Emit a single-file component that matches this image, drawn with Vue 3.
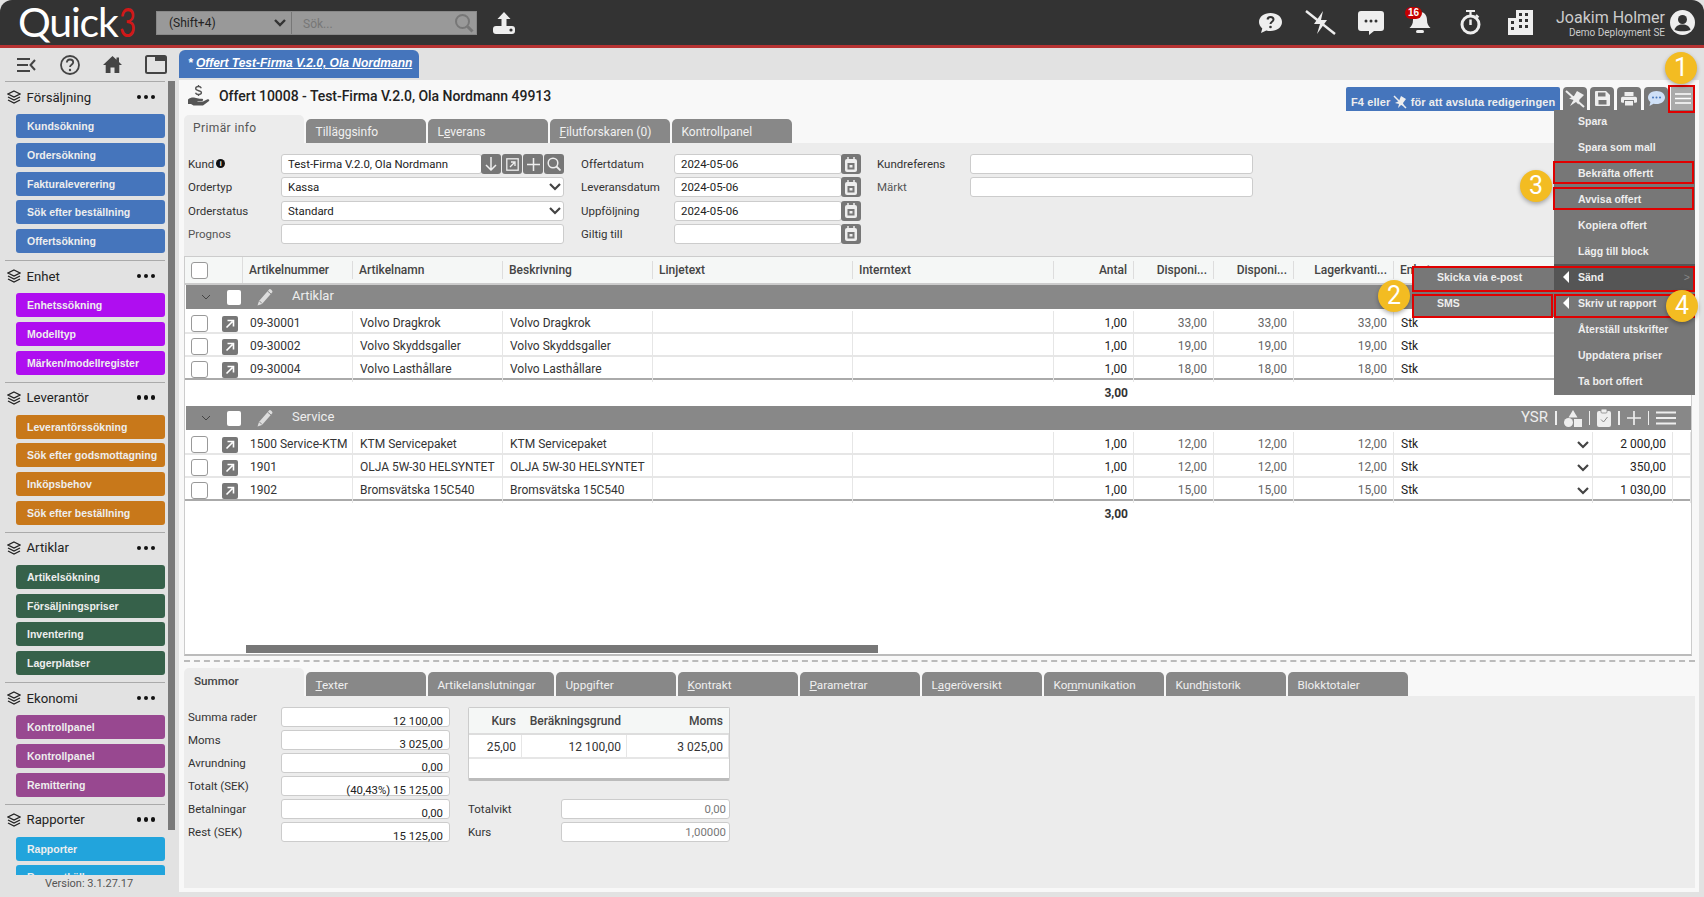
<script setup>
const sections = [
  { title: 'Försäljning', color: 'blue', items: ['Kundsökning', 'Ordersökning', 'Fakturaleverering', 'Sök efter beställning', 'Offertsökning'] },
  { title: 'Enhet', color: 'violet', items: ['Enhetssökning', 'Modelltyp', 'Märken/modellregister'] },
  { title: 'Leverantör', color: 'orange', items: ['Leverantörssökning', 'Sök efter godsmottagning', 'Inköpsbehov', 'Sök efter beställning'] },
  { title: 'Artiklar', color: 'green', items: ['Artikelsökning', 'Försäljningspriser', 'Inventering', 'Lagerplatser'] },
  { title: 'Ekonomi', color: 'plum', items: ['Kontrollpanel', 'Kontrollpanel', 'Remittering'] },
  { title: 'Rapporter', color: 'sky', items: ['Rapporter', 'Rapportkällor'] },
]
const topTabs = [['', '', 'Tilläggsinfo'], ['L', 'e', 'verans'], ['', 'F', 'ilutforskaren (0)'], ['', '', 'Kontrollpanel']]
const bottomTabs = [
  ['', 'T', 'exter', 120], ['', '', 'Artikelanslutningar', 126], ['', '', 'Uppgifter', 120], ['', 'K', 'ontrakt', 120],
  ['', 'P', 'arametrar', 121], ['L', 'a', 'geröversikt', 120], ['Ko', 'm', 'munikation', 120], ['Kund', 'h', 'istorik', 120], ['', '', 'Blokktotaler', 120],
]
const formMiddle = [['Offertdatum', '2024-05-06'], ['Leveransdatum', '2024-05-06'], ['Uppföljning', '2024-05-06'], ['Giltig till', '']]
const columns = [
  ['Artikelnummer', 'l'], ['Artikelnamn', 'l'], ['Beskrivning', 'l'], ['Linjetext', 'l'], ['Interntext', 'l'],
  ['Antal', 'r'], ['Disponi...', 'r'], ['Disponi...', 'r'], ['Lagerkvanti...', 'r'], ['Enhet', 'l'],
]
const groups = [
  { name: 'Artiklar', tools: false, rows: [
    ['09-30001', 'Volvo Dragkrok', '1,00', '33,00', ''],
    ['09-30002', 'Volvo Skyddsgaller', '1,00', '19,00', ''],
    ['09-30004', 'Volvo Lasthållare', '1,00', '18,00', ''],
  ] },
  { name: 'Service', tools: true, rows: [
    ['1500 Service-KTM', 'KTM Servicepaket', '1,00', '12,00', '2 000,00'],
    ['1901', 'OLJA 5W-30 HELSYNTET', '1,00', '12,00', '350,00'],
    ['1902', 'Bromsvätska 15C540', '1,00', '15,00', '1 030,00'],
  ] },
]
const totals = [['Summa rader', '12 100,00'], ['Moms', '3 025,00'], ['Avrundning', '0,00'], ['Totalt (SEK)', '(40,43%) 15 125,00'], ['Betalningar', '0,00'], ['Rest (SEK)', '15 125,00']]
const menu = ['Spara', 'Spara som mall', 'Bekräfta offertt', 'Avvisa offert', 'Kopiera offert', 'Lägg till block', 'Sänd', 'Skriv ut rapport', 'Återställ utskrifter', 'Uppdatera priser', 'Ta bort offert']
const marks = ['m-burger', 'm-confirm', 'm-reject', 'm-send', 'm-sms', 'm-print']
const badges = [['1', 'b1'], ['2', 'b2'], ['3', 'b3'], ['4', 'b4']]
</script>

<template>
  <div class="app">
    <header class="top">
      <div class="logo">Quick<span class="logo-3">3</span></div>
      <div class="search">
        <span class="search-mode">(Shift+4)</span>
        <svg class="search-chev" width="12" height="8" viewBox="0 0 12 8"><path d="M1 1l5 5 5-5" fill="none" stroke="#333" stroke-width="2.4"/></svg>
        <span class="search-text">Sök...</span>
        <svg width="20" height="20" viewBox="0 0 20 20"><circle cx="8.5" cy="8.5" r="6.5" fill="none" stroke="#777" stroke-width="2"/><path d="M13.5 13.5l5 5" stroke="#777" stroke-width="3"/></svg>
      </div>
      <svg class="upload" width="24" height="24" viewBox="0 0 24 24"><path d="M12 1L5.5 8h4v7h5V8h4z" fill="#eee"/><rect x="1" y="15" width="22" height="8" rx="3" fill="#eee"/><circle cx="19" cy="19" r="1.6" fill="#333"/></svg>
      <div class="top-icons">
        <svg width="25" height="22" viewBox="0 0 25 22"><path d="M12.5 1C6 1 1 4.800 1 10c0 2.600 1.300 4.800 3.300 6.400L3 21l5.300-2.600c1.300.4 2.700.6 4.200.6C19 19 24 15.200 24 10S19 1 12.500 1z" fill="#eee"/><path d="M9.500 7.500c.3-1.700 1.500-2.500 3-2.500 1.800 0 3 1 3 2.500 0 2.300-3 2.300-3 4.500" fill="none" stroke="#333" stroke-width="2"/><circle cx="12.500" cy="15" r="1.300" fill="#333"/></svg>
        <svg width="31" height="25" viewBox="0 0 31 25"><path d="M18 1L9 14h6l-3 10 10-14h-6z" fill="#eee"/><path d="M1 1l29 23" stroke="#eee" stroke-width="2.400"/></svg>
        <svg width="26" height="24" viewBox="0 0 26 24"><path d="M3 0h20a3 3 0 013 3v14a3 3 0 01-3 3h-7l-5 4v-4H3a3 3 0 01-3-3V3a3 3 0 013-3z" fill="#eee"/><circle cx="8" cy="10" r="1.500" fill="#333"/><circle cx="13" cy="10" r="1.500" fill="#333"/><circle cx="18" cy="10" r="1.500" fill="#333"/></svg>
        <div class="bell">
          <svg width="24" height="25" viewBox="0 0 24 25"><path d="M12 2c-4.500 0-7 3.500-7 8 0 4-1.500 6-3.500 8h21c-2-2-3.500-4-3.500-8 0-4.500-2.500-8-7-8z" fill="#eee"/><rect x="8" y="20" width="8" height="3" rx="1.500" fill="#eee"/></svg>
          <span class="bell-count">16</span>
        </div>
        <svg class="timer" width="21" height="25" viewBox="0 0 21 25"><path d="M6 1h9M10.500 1v4M16 5l2.500 2.500" stroke="#eee" stroke-width="2.200" fill="none"/><circle cx="10.500" cy="14.500" r="8.500" fill="none" stroke="#eee" stroke-width="3"/><path d="M10.500 9.500v5.500" stroke="#eee" stroke-width="2.500"/></svg>
        <svg width="25" height="25" viewBox="0 0 25 25" fill="#eee"><path d="M8 0h17v25H0V8h8z"/><g fill="#333"><rect x="11" y="3" width="3" height="3"/><rect x="17" y="3" width="3" height="3"/><rect x="11" y="9" width="3" height="3"/><rect x="17" y="9" width="3" height="3"/><rect x="11" y="15" width="3" height="3"/><rect x="17" y="15" width="3" height="3"/><rect x="3" y="11" width="3" height="3"/><rect x="3" y="17" width="3" height="3"/></g></svg>
      </div>
      <div class="user">
        <div class="user-name">Joakim Holmer</div>
        <div class="user-org">Demo Deployment SE</div>
      </div>
      <svg class="avatar" width="25" height="25" viewBox="0 0 25 25"><circle cx="12.500" cy="12.500" r="12.500" fill="#eee"/><circle cx="12.500" cy="9.500" r="4.500" fill="#333"/><path d="M4.500 20c1-4 4-5.500 8-5.500s7 1.500 8 5.500c-4.500 1.800-11.500 1.800-16 0z" fill="#333"/></svg>
    </header>

    <div class="body">
      <aside class="side">
        <div class="side-tools">
          <svg width="19" height="14" viewBox="0 0 19 14"><path d="M0 1h13M0 7h11M0 13h13M18 2l-4.500 5 4.500 5" fill="none" stroke="#444" stroke-width="2"/></svg>
          <svg width="20" height="20" viewBox="0 0 20 20"><circle cx="10" cy="10" r="9" fill="none" stroke="#444" stroke-width="1.800"/><path d="M6.800 7.500C7 5.500 8.300 4.500 10 4.500c1.900 0 3.200 1.100 3.200 2.700 0 2.500-3.200 2.500-3.200 4.800" fill="none" stroke="#444" stroke-width="1.800"/><circle cx="10" cy="15" r="1.200" fill="#444"/></svg>
          <svg width="19" height="17" viewBox="0 0 19 17"><path d="M9.500 0L0 9h2.700v8h4.800v-5.500h4V17h4.800V9H19l-3-2.900V1.500h-2.500v2.200z" fill="#444"/></svg>
          <svg width="22" height="19" viewBox="0 0 22 19"><rect x="1" y="1" width="20" height="17" rx="1.500" fill="none" stroke="#444" stroke-width="2"/><path d="M10 1h11v5H10z" fill="#444"/></svg>
        </div>
        <div class="side-scroll">
          <nav class="side-list">
            <section v-for="sec in sections" :key="sec.title" class="side-sec">
              <div class="side-head">
                <svg width="14" height="14" viewBox="0 0 14 14" fill="none" stroke="#222" stroke-width="1.300"><path d="M7 1l6 3-6 3-6-3z"/><path d="M1 7l6 3 6-3"/><path d="M1 10l6 3 6-3"/></svg>
                <span class="side-title">{{ sec.title }}</span>
                <span class="side-dots"><i></i><i></i><i></i></span>
              </div>
              <div class="side-btns">
                <a v-for="(it, i) in sec.items" :key="i" class="side-btn" :class="'c-' + sec.color">{{ it }}</a>
              </div>
            </section>
          </nav>
          <div class="side-thumb"></div>
        </div>
        <div class="version">Version: 3.1.27.17</div>
      </aside>

      <main class="main">
        <div class="doc-tabs">
          <div class="doc-tab">* <span>Offert Test-Firma V.2.0, Ola Nordmann</span></div>
        </div>
        <div class="panel">
          <div class="title-row">
            <svg class="title-icon" width="22" height="22" viewBox="0 0 22 22"><path d="M0 15.500c2-1.800 4.500-2.300 7-1.800l4.500 1h2.500c1.600 0 1.600 2.300-.2 2.300H9.500v.6H15l4.500-2.300c1.600-.6 2.400 1 1.200 2L15 21.500H5.500L3 20H0z" fill="#555"/><path d="M10.500 1v1.500M10.500 10.500V12M13.300 4.300c-.4-1.100-1.500-1.800-2.800-1.800-1.600 0-2.800.8-2.800 2.100 0 2.900 5.700 1.300 5.700 4 0 1.200-1.300 1.900-2.900 1.900-1.400 0-2.600-.6-3-1.800" fill="none" stroke="#555" stroke-width="1.400"/></svg>
            <h1 class="title">Offert 10008 - Test-Firma V.2.0, Ola Nordmann 49913</h1>
            <div class="toolbar">
              <div class="pill">F4 eller
                <svg width="14" height="14" viewBox="0 0 14 14"><path d="M8 1L6 6 2 8l4 1-1 4 3-3 3 1-1-3 3-4z" fill="#eee"/><path d="M1 1l12 12" stroke="#eee" stroke-width="1.500"/></svg>
                för att avsluta redigeringen</div>
              <button class="tool">
                <svg width="20" height="18" viewBox="0 0 20 18"><path d="M12 1L9 6 4 8.500l4.500 1.500L5 16l6-4 2.500 2.500 1-5L19 5z" fill="#eee"/><path d="M1 1l18 16" stroke="#eee" stroke-width="2"/></svg>
              </button>
              <button class="tool">
                <svg width="15" height="15" viewBox="0 0 15 15"><path d="M1 0h10l4 4v10a1 1 0 01-1 1H1a1 1 0 01-1-1V1a1 1 0 011-1z" fill="#eee"/><rect x="3" y="1.500" width="7.500" height="4" fill="#777"/><rect x="3.500" y="9" width="8" height="4.500" fill="#777"/></svg>
              </button>
              <button class="tool">
                <svg width="16" height="14" viewBox="0 0 16 14" fill="#eee"><rect x="3.500" y="0" width="9" height="4"/><rect x="0" y="4.800" width="16" height="6" rx="1.500"/><rect x="3.500" y="8.500" width="9" height="5.500" stroke="#777"/></svg>
              </button>
              <button class="tool">
                <svg width="17" height="15" viewBox="0 0 17 15"><path d="M8.500 0C3.800 0 0 2.800 0 6.500c0 1.800.9 3.400 2.400 4.500L1.500 15l4-2.300c1 .3 2 .4 3 .4 4.700 0 8.500-2.900 8.500-6.600S13.200 0 8.500 0z" fill="#cfe0f7"/><circle cx="5" cy="6.500" r="1" fill="#4575bc"/><circle cx="8.500" cy="6.500" r="1" fill="#4575bc"/><circle cx="12" cy="6.500" r="1" fill="#4575bc"/></svg>
              </button>
              <button class="tool tool-on">
                <svg width="16" height="11" viewBox="0 0 16 11"><path d="M0 1h16M0 5.500h16M0 10h16" stroke="#fff" stroke-width="1.400"/></svg>
              </button>
            </div>
          </div>

          <div class="tabs">
            <div class="tab tab-on">Primär info</div>
            <div v-for="t in topTabs" :key="t[2]" class="tab">{{ t[0] }}<u>{{ t[1] }}</u>{{ t[2] }}</div>
          </div>

          <div class="form">
            <div class="form-col col-a">
              <div class="field">
                <label class="lbl">Kund<span class="info">i</span></label>
                <div class="input grow">Test-Firma V.2.0, Ola Nordmann</div>
                <button class="mini first"><svg width="12" height="14" viewBox="0 0 12 14"><path d="M6 0v13M1 8l5 5 5-5" fill="none" stroke="#eee" stroke-width="1.500"/></svg></button>
                <button class="mini"><svg width="13" height="13" viewBox="0 0 13 13"><rect x=".8" y=".8" width="11.400" height="11.400" fill="none" stroke="#eee" stroke-width="1.300"/><path d="M4 9l4.500-4.500M5 4h4v4" fill="none" stroke="#eee" stroke-width="1.300"/></svg></button>
                <button class="mini"><svg width="13" height="13" viewBox="0 0 13 13"><path d="M6.500 0v13M0 6.500h13" stroke="#eee" stroke-width="1.500"/></svg></button>
                <button class="mini"><svg width="14" height="14" viewBox="0 0 14 14"><circle cx="6" cy="6" r="4.800" fill="none" stroke="#eee" stroke-width="1.500"/><path d="M9.500 9.500l4 4" stroke="#eee" stroke-width="1.800"/></svg></button>
              </div>
              <div class="field">
                <label class="lbl">Ordertyp</label>
                <div class="input grow select">Kassa<svg width="12" height="8" viewBox="0 0 12 8"><path d="M1 1l5 5 5-5" fill="none" stroke="#444" stroke-width="2.200"/></svg></div>
              </div>
              <div class="field">
                <label class="lbl">Orderstatus</label>
                <div class="input grow select">Standard<svg width="12" height="8" viewBox="0 0 12 8"><path d="M1 1l5 5 5-5" fill="none" stroke="#444" stroke-width="2.200"/></svg></div>
              </div>
              <div class="field">
                <label class="lbl muted">Prognos</label>
                <div class="input grow"></div>
              </div>
            </div>
            <div class="form-col col-b">
              <div v-for="f in formMiddle" :key="f[0]" class="field">
                <label class="lbl">{{ f[0] }}</label>
                <div class="input grow">{{ f[1] }}</div>
                <button class="mini first"><svg width="12" height="15" viewBox="0 0 12 15"><path d="M3 0v3M9 0v3" stroke="#eee" stroke-width="1.500"/><rect x="0" y="2" width="12" height="13" rx="2" fill="#eee"/><rect x="2.500" y="6" width="7" height="6.500" fill="#777"/><rect x="4.500" y="8" width="3" height="2.500" fill="#eee"/></svg></button>
              </div>
            </div>
            <div class="form-col col-c">
              <div class="field"><label class="lbl">Kundreferens</label><div class="input grow"></div></div>
              <div class="field"><label class="lbl muted">Märkt</label><div class="input grow"></div></div>
            </div>
          </div>

          <div class="table">
            <div class="t-row t-head">
              <div class="t-check"><span class="box"></span></div>
              <div v-for="(c, i) in columns" :key="i" class="th" :class="c[1] === 'r' ? 'right' : ''">{{ c[0] }}</div>
            </div>
            <div class="t-body">
              <template v-for="g in groups" :key="g.name">
                <div class="g-bar">
                  <svg class="g-chev" width="10" height="6" viewBox="0 0 10 6"><path d="M1 1l4 4 4-4" fill="none" stroke="#444" stroke-width="1"/></svg>
                  <span class="g-box"></span>
                  <svg class="g-pen" width="18" height="18" viewBox="0 0 18 18"><path d="M13.500 1c1.500 0 3 1.500 3 3L6 16l-4.500 1.500L3 13z" fill="#ddd"/><path d="M11.500 3l3.500 3M3.500 13l2.500 2.500" stroke="#888" stroke-width="1"/></svg>
                  <span class="g-name">{{ g.name }}</span>
                  <div v-if="g.tools" class="g-tools">
                    <span class="g-ysr">YSR</span><i class="g-sep"></i>
                    <svg width="18" height="17" viewBox="0 0 18 17" fill="#eee"><path d="M9 0l4.500 7.500h-9z"/><circle cx="4.500" cy="12.500" r="4.500"/><rect x="10" y="9" width="8" height="8"/></svg><i class="g-sep"></i>
                    <svg width="14" height="18" viewBox="0 0 14 18"><rect x="0" y="2" width="14" height="16" rx="2" fill="#eee"/><rect x="4" y="0" width="6" height="4" rx="1" fill="#eee" stroke="#888" stroke-width=".8"/><path d="M4 10.500l2.500 2.500L10.500 8" fill="none" stroke="#888" stroke-width="1"/></svg><i class="g-sep"></i>
                    <svg width="14" height="14" viewBox="0 0 14 14"><path d="M7 0v14M0 7h14" stroke="#eee" stroke-width="1.700"/></svg><i class="g-sep"></i>
                    <svg width="20" height="14" viewBox="0 0 20 14"><path d="M0 1.500h20M0 7h20M0 12.500h20" stroke="#eee" stroke-width="2"/></svg>
                  </div>
                </div>
                <div class="g-rows">
                  <div v-for="r in g.rows" :key="r[0]" class="t-row d-row">
                    <div class="t-check">
                      <span class="box"></span>
                      <span class="open"><svg width="10" height="10" viewBox="0 0 10 10"><path d="M1.500 8.500l6-6M2.500 1.500h6v6" fill="none" stroke="#fff" stroke-width="1.600"/></svg></span>
                    </div>
                    <div class="td">{{ r[0] }}</div>
                    <div class="td">{{ r[1] }}</div>
                    <div class="td">{{ r[1] }}</div>
                    <div class="td"></div>
                    <div class="td"></div>
                    <div class="td right dark">{{ r[2] }}</div>
                    <div class="td right">{{ r[3] }}</div>
                    <div class="td right">{{ r[3] }}</div>
                    <div class="td right">{{ r[3] }}</div>
                    <div class="td dark unit">Stk
                      <svg v-if="r[4]" width="12" height="8" viewBox="0 0 12 8"><path d="M1 1l5 5 5-5" fill="none" stroke="#444" stroke-width="2.200"/></svg>
                    </div>
                    <div class="td right dark">{{ r[4] }}</div>
                    <div class="td"></div>
                  </div>
                </div>
                <div class="t-row sum-row">
                  <div class="sum-val">3,00</div>
                </div>
              </template>
            </div>
            <div class="t-scroll"><div class="t-thumb"></div></div>
          </div>

          <div class="split"></div>

          <div class="tabs tabs-low">
            <div class="tab tab-on tab-sum">Summor</div>
            <div v-for="t in bottomTabs" :key="t[2]" class="tab" :class="t[3] === 126 ? 'tab-wide' : ''">{{ t[0] }}<u>{{ t[1] }}</u>{{ t[2] }}</div>
          </div>

          <div class="summary">
            <div class="sum-left">
              <div v-for="t in totals" :key="t[0]" class="field">
                <label class="lbl sum-lbl">{{ t[0] }}</label>
                <div class="input grow sum-input">{{ t[1] }}</div>
              </div>
            </div>
            <div class="sum-right">
              <div class="vat">
                <div class="vat-head"><span>Kurs</span><span>Beräkningsgrund</span><span>Moms</span></div>
                <div class="vat-row"><span>25,00</span><span>12 100,00</span><span>3 025,00</span></div>
              </div>
              <div class="sum-extra">
                <div class="field"><label class="lbl sum-lbl">Totalvikt</label><div class="input grow ro">0,00</div></div>
                <div class="field"><label class="lbl sum-lbl">Kurs</label><div class="input grow ro">1,00000</div></div>
              </div>
            </div>
          </div>
        </div>
      </main>
    </div>

    <div class="menu">
      <div v-for="(m, i) in menu" :key="m" class="menu-item" :class="{ 'menu-active': i === 6 }">
        <span v-if="i === 6 || i === 7" class="menu-arrow"></span>{{ m }}
        <span v-if="i === 6" class="menu-more">&gt;</span>
      </div>
    </div>
    <div class="submenu">
      <div class="sub-item">Skicka via e-post</div>
      <div class="sub-item">SMS</div>
    </div>
    <div v-for="m in marks" :key="m" class="mark" :class="m"></div>
    <div v-for="b in badges" :key="b[0]" class="badge" :class="b[1]">{{ b[0] }}</div>
  </div>
</template>

<style>
html, body { margin: 0; background: #e2e2e2; overflow: hidden; }
</style>

<style scoped>
* { box-sizing: border-box; }
.app { position: relative; width: 1704px; height: 897px; overflow: hidden; background: #e2e2e2; font: 12px Roboto, "Liberation Sans", sans-serif; color: #333; }

.top { height: 48px; background: #333; border-bottom: 3px solid #b73232; border-radius: 12px 12px 0 0; display: flex; align-items: center; padding: 0 9px 0 18px; }
.logo { width: 138px; font: 400 41px/44px Lato, Roboto, sans-serif; letter-spacing: -1.2px; color: #fff; margin-top: -2px; white-space: nowrap; }
.logo-3 { display: inline-block; color: #d01818; margin-left: 1px; transform: scaleX(.72); transform-origin: left center; }
.search { width: 321px; height: 24px; background: #999; display: flex; align-items: center; padding: 0 2px 0 12px; border: 1px solid #888; }
.search-mode { width: 105px; color: #222; }
.search-chev { margin-right: 5px; }
.search-text { flex: 1; height: 22px; line-height: 24px; border-left: 1px solid #777; padding-left: 11px; color: #777; }
.upload { margin-left: 15px; }
.top-icons { margin-left: auto; display: flex; align-items: center; gap: 22px; }
.bell { position: relative; width: 26px; display: flex; justify-content: flex-end; margin-right: 6px; }
.bell-count { position: absolute; left: -1px; top: -3px; width: 17px; height: 12px; border-radius: 6px; background: #c40000; color: #fff; font: 700 10px/12px "Liberation Sans", sans-serif; text-align: center; }
.timer { margin-right: 5px; }
.user { width: 132px; text-align: right; color: #ccc; }
.user-name { font-size: 16px; line-height: 18px; margin-top: 1px; }
.user-org { font-size: 10px; line-height: 11px; }
.avatar { margin-left: 5px; }

.body { height: 849px; display: flex; }
.side { width: 179px; flex: none; padding-left: 5px; display: flex; flex-direction: column; }
.side-tools { height: 33px; display: flex; align-items: center; }
.side-tools svg:nth-child(1) { margin: 0 24px 0 12px; }
.side-tools svg:nth-child(2) { margin-right: 23px; }
.side-tools svg:nth-child(3) { margin-right: 23px; }
.side-scroll { height: 794px; display: flex; gap: 3px; }
.side-list { width: 160px; height: 794px; overflow: hidden; }
.side-sec { border-top: 1px solid #aaa; padding-bottom: 7px; }
.side-head { height: 32px; display: flex; align-items: center; padding-left: 2px; padding-bottom: 2px; }
.side-title { margin-left: 5.500px; font-size: 13.200px; color: #222; }
.side-dots { margin-left: auto; margin-right: 10px; display: flex; gap: 2.500px; }
.side-dots i { width: 4.500px; height: 4.500px; border-radius: 50%; background: #111; }
.side-btns { display: flex; flex-direction: column; gap: 4.750px; padding-left: 11px; }
.side-btn { height: 24px; flex: none; border-radius: 3px; padding-left: 11px; font: 700 10.500px/24px "Liberation Sans", sans-serif; color: #eee; }
.c-blue { background: #4575bc; }
.c-violet { background: #af0ef0; }
.c-orange { background: #c8781a; }
.c-green { background: #36614a; }
.c-plum { background: #984890; }
.c-sky { background: #22a4dc; }
.side-thumb { width: 7px; height: 749px; background: #7a7a7a; }
.version { height: 22px; line-height: 17px; text-align: center; color: #555; font-size: 11px; padding-right: 6px; }

.main { width: 1520px; flex: none; }
.doc-tabs { height: 32px; padding-top: 2px; }
.doc-tab { width: 240px; height: 28px; background: #4575bc; border-radius: 6px 6px 0 0; color: #fff; font: italic 700 12px/26px "Liberation Sans", sans-serif; padding-left: 9px; white-space: nowrap; }
.doc-tab span { text-decoration: underline; }
.panel { height: 812px; background: #f8f8f8; padding: 0 4px 4px 5px; display: flex; flex-direction: column; }
.title-row { height: 35px; display: flex; padding-left: 4px; }
.title-icon { margin-top: 4px; }
.title { margin: 0 0 0 9px; font-size: 14px; font-weight: 500; line-height: 32px; color: #222; letter-spacing: -.04px; }
.toolbar { margin-left: auto; margin-top: 7px; display: flex; gap: 3px; }
.pill { height: 24px; width: 214px; border-radius: 2px 2px 0 0; background: #4575bc; color: #eee; font: 700 11px/31px "Liberation Sans", sans-serif; letter-spacing: .1px; padding-left: 5px; white-space: nowrap; overflow: hidden; }
.pill svg { vertical-align: -3px; }
.tool { width: 24px; height: 23px; border: 0; padding: 0; background: #777; border-radius: 4px 4px 0 0; display: flex; align-items: center; justify-content: center; }
.tool-on { background: #aaa; border-radius: 0; }

.tabs { height: 28px; display: flex; align-items: flex-end; gap: 2px; }
.tab { width: 120px; height: 24px; background: #888; border-radius: 5px 5px 0 0; color: #f0f0f0; padding-left: 9.500px; line-height: 27px; white-space: nowrap; }
.tab u { text-decoration: underline; }
.tab-on { height: 28px; background: #ececec; color: #555; line-height: 26px; padding-left: 9px; letter-spacing: .4px; }
.tab-wide { width: 126px; }
.tab-sum { font-weight: 500; color: #444; letter-spacing: 0; padding-left: 10px; }
.tabs-low .tab { font-size: 11.700px; line-height: 26px; }

.form { height: 113px; background: #ececec; padding: 11px 0 0 4px; display: flex; }
.form-col { display: flex; flex-direction: column; gap: 3.300px; }
.col-a { width: 376px; margin-right: 17px; }
.col-b { width: 280px; margin-right: 16px; }
.col-c { width: 376px; }
.field { display: flex; height: 20px; align-items: center; }
.lbl { width: 93px; flex: none; font-size: 11.500px; color: #333; }
.muted { color: #555; }
.info { display: inline-block; width: 9px; height: 9px; border-radius: 50%; background: #111; color: #fff; font: 700 7px/9px "Liberation Sans", sans-serif; text-align: center; margin-left: 2px; vertical-align: 2px; }
.input { height: 20px; background: #fff; border: 1px solid #ccc; border-radius: 3px; padding: 0 6px; line-height: 18px; font-size: 11.400px; color: #222; white-space: nowrap; overflow: hidden; }
.grow { flex: 1; min-width: 0; }
.select { display: flex; align-items: center; justify-content: space-between; padding-right: 2px; }
.mini { flex: none; width: 20px; height: 20px; padding: 0; border: 0; margin-left: 1px; background: #777; border-radius: 3px; display: flex; align-items: center; justify-content: center; }
.mini.first { margin-left: -1px; }

.table { width: 1508px; height: 400px; background: #fff; border: 1px solid #ccc; border-bottom: 2px solid #bbb; display: flex; flex-direction: column; }
.t-row { display: grid; grid-template-columns: 58px 110px 150px 150px 200px 201px 80px 80px 80px 100px 199px 80px 1fr; }
.t-head { height: 28px; background: #f5f7f6; border-bottom: 2px solid #ccc; align-items: center; font-weight: 500; color: #444; }
.t-check { display: flex; align-items: center; padding-left: 6px; gap: 14px; height: 100%; border-right: 1px solid #ddd; }
.box { width: 17px; height: 17px; background: #fff; border: 1px solid #999; border-radius: 3px; }
.th { height: 18px; line-height: 18px; padding: 0 6px; border-right: 1px solid #ddd; white-space: nowrap; overflow: hidden; }
.right { text-align: right; }
.t-body { flex: 1; overflow: hidden; }
.g-bar { height: 24px; margin-left: 1px; background: #888; display: flex; align-items: center; color: #eee; }
.g-chev { margin-left: 15px; }
.g-box { width: 14px; height: 15px; background: #fff; border-radius: 2px; margin-left: 16px; }
.g-pen { margin-left: 15px; }
.g-name { margin-left: 18px; margin-bottom: 4px; font-size: 13px; }
.g-tools { margin-left: auto; display: flex; align-items: center; gap: 7px; padding-right: 15px; }
.g-ysr { font-size: 15px; color: #eee; margin-bottom: 2px; }
.g-sep { width: 1.500px; height: 14px; background: #eee; }
.g-rows { padding-top: 2px; }
.d-row { height: 23px; border-bottom: 2px solid #e6e6e6; align-items: center; }
.d-row:last-child { border-bottom: 2px solid #aaa; }
.d-row .t-check { border-right: 0; }
.open { width: 16px; height: 16px; border-radius: 2px; background: #777; display: flex; align-items: center; justify-content: center; }
.td { height: 100%; padding: 0 6px 0 7px; line-height: 25px; border-right: 1px solid #e6e6e6; white-space: nowrap; color: #666; }
.td:nth-child(-n+4) { color: #333; }
.dark { color: #222; }
.unit { display: flex; justify-content: space-between; align-items: center; padding-right: 3px; }
.sum-row { height: 26px; }
.sum-val { grid-column: 7; text-align: right; padding-right: 6px; line-height: 27px; font-weight: 700; color: #333; }
.t-scroll { height: 9px; padding-left: 61px; position: relative; }
.t-thumb { width: 632px; height: 8px; background: #777; }

.split { height: 12px; margin-top: 4px; flex: none; border-top: 2px dashed #bbb; margin-bottom: -4px; }
.summary { flex: 1; background: #ececec; padding: 11px 0 0 4px; display: flex; gap: 18px; }
.sum-left { width: 262px; display: flex; flex-direction: column; gap: 3px; }
.sum-lbl { width: 93px; }
.sum-input { text-align: right; padding-top: 4px; line-height: 18px; overflow: visible; }
.sum-right { width: 262px; }
.vat { height: 74px; background: #fff; border: 1px solid #ccc; border-bottom: 3px solid #bbb; border-radius: 2px; }
.vat-head, .vat-row { display: grid; grid-template-columns: 53px 105px 102px; text-align: right; }
.vat-head { height: 27px; line-height: 27px; background: #f5f7f6; border-bottom: 2px solid #ddd; font-weight: 500; color: #444; }
.vat-head span { padding-right: 6px; }
.vat-row { height: 24px; line-height: 24px; border-bottom: 2px solid #e6e6e6; color: #333; }
.vat-row span { padding-right: 5px; border-right: 1px solid #e6e6e6; }
.sum-extra { margin-top: 18px; display: flex; flex-direction: column; gap: 3px; }
.ro { text-align: right; color: #777; padding-right: 3px; }

.menu { position: absolute; left: 1554px; top: 110px; width: 141px; height: 285px; background: #777; }
.menu-item { height: 26px; padding-left: 24px; font: 700 10.500px/26px "Liberation Sans", sans-serif; color: #eee; position: relative; white-space: nowrap; }
.menu-item:first-child { height: 24px; line-height: 22px; }
.menu-active { background: #555; }
.menu-arrow { position: absolute; left: 9px; top: 7px; border: 6px solid transparent; border-left: 0; border-right: 6px solid #fff; }
.menu-more { position: absolute; right: 5px; top: 0; color: #888; font-weight: 400; }
.submenu { position: absolute; left: 1412px; top: 266px; width: 142px; height: 51px; background: #777; }
.sub-item { height: 26px; padding-left: 25px; font: 700 10.500px/22px "Liberation Sans", sans-serif; color: #eee; }
.mark { position: absolute; border: 2px solid #e00000; }
.m-burger { left: 1668px; top: 85px; width: 27px; height: 28px; }
.m-confirm { left: 1553px; top: 161px; width: 141px; height: 23px; }
.m-reject { left: 1553px; top: 187px; width: 141px; height: 23px; }
.m-send { left: 1412px; top: 266px; width: 283px; height: 26px; }
.m-sms { left: 1412px; top: 294px; width: 141px; height: 24px; }
.m-print { left: 1554px; top: 294px; width: 141px; height: 24px; }
.badge { position: absolute; width: 32px; height: 32px; border-radius: 50%; background: #f3bc22; color: #fff; font: 400 25px/32px Roboto, sans-serif; text-align: center; box-shadow: 0 2px 4px rgba(0,0,0,.3); }
.b1 { left: 1665px; top: 52px; }
.b2 { left: 1378px; top: 280px; }
.b3 { left: 1520px; top: 170px; }
.b4 { left: 1666px; top: 290px; }
</style>
